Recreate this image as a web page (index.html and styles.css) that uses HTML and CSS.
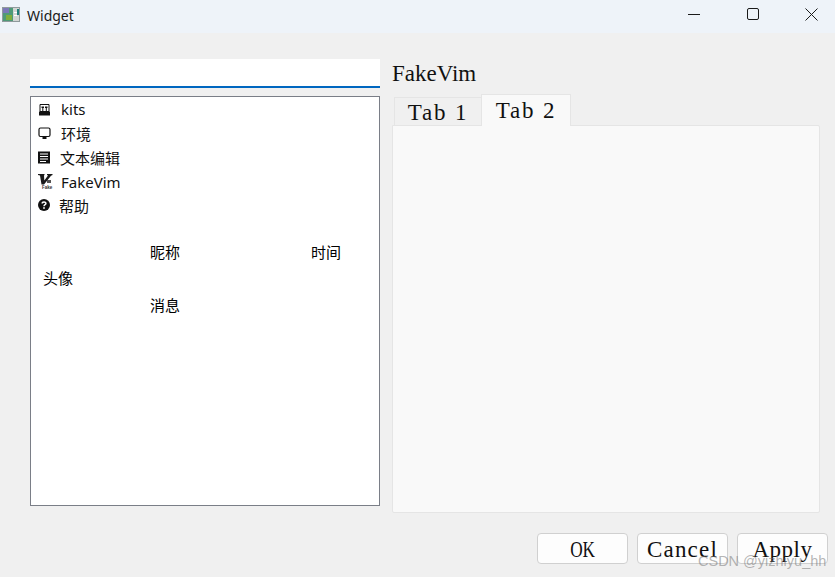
FILE: index.html
```html
<!DOCTYPE html>
<html lang="zh">
<head>
<meta charset="utf-8">
<title>Widget</title>
<link rel="stylesheet" href="styles.css">
</head>
<body>
<div class="window">
  <header class="titlebar">
    <svg class="app-icon" width="18" height="18" viewBox="0 0 18 18">
      <rect x="0" y="1" width="18" height="15" fill="#8f9a9c"/>
      <rect x="1" y="2" width="10" height="13" fill="#4f9a78"/>
      <rect x="1" y="2" width="6" height="5" fill="#7a78b8"/>
      <rect x="4" y="9" width="6" height="5" fill="#7fae3c"/>
      <rect x="11" y="2" width="6" height="13" fill="#d3d6d4"/>
      <rect x="15" y="3" width="2" height="6" fill="#1f7f7a"/>
      <rect x="12" y="6" width="3" height="1" fill="#fff"/>
      <rect x="12" y="9" width="3" height="1" fill="#fff"/>
    </svg>
    <span class="title">Widget</span>
    <div class="controls">
      <svg class="ctl ctl-min" width="12" height="12" viewBox="0 0 12 12"><path d="M0 6.500H12" stroke="#1a1a1a" fill="none"/></svg>
      <svg class="ctl ctl-max" width="12" height="12" viewBox="0 0 12 12"><rect x="0.500" y="0.500" width="11" height="11" rx="1.500" stroke="#1a1a1a" fill="none"/></svg>
      <svg class="ctl ctl-close" width="13" height="13" viewBox="0 0 13 13"><path d="M0.500 0.500L12.500 12.500M12.500 0.500L0.500 12.500" stroke="#1a1a1a" fill="none"/></svg>
    </div>
  </header>

  <main class="content">
    <div class="top">
      <section class="left">
        <div class="search"></div>
        <div class="listbox">
          <ul class="items">
            <li class="item">
              <svg class="ico ico-kits" width="13" height="13" viewBox="0 0 13 13"><path d="M2 1.500h9v7H2z" fill="none" stroke="#111"/><path d="M3.500 3.500h2.500v1.500H5.300V8h-1V5h-.8zM7 3.500h2.500v1.500H8.800V8h-1V5H7z" fill="#111"/><path d="M1 8.500h11v4H1z" fill="#111"/></svg>
              <span>kits</span>
            </li>
            <li class="item">
              <svg class="ico ico-env" width="13" height="13" viewBox="0 0 13 13"><rect x="1" y="1" width="11" height="8.500" rx="1.500" fill="none" stroke="#111" stroke-width="1.200"/><path d="M4.500 10h4v2h-4z" fill="#111"/></svg>
              <span>环境</span>
            </li>
            <li class="item">
              <svg class="ico ico-text" width="12" height="13" viewBox="0 0 12 13"><rect x="0" y="0.500" width="12" height="12" fill="#111"/><path d="M2 3h8M2 5.500h8M2 8h8M2 10.500h6" stroke="#fff" stroke-width="1"/></svg>
              <span>文本编辑</span>
            </li>
            <li class="item item-vim">
              <svg class="ico ico-vim" width="15" height="16" viewBox="0 0 15 16"><path d="M0 1h6.500v1L6 2.500 6.300 7.500 10 2.500 9 2V1h5.500v1L13 2.800 6 11.500H3.500L2 2.500 0 2z" fill="#1a1a1a"/><path d="M9 7h4v3H9z" fill="#555"/><text class="vim-tag" x="4" y="15.500">Fake</text></svg>
              <span>FakeVim</span>
            </li>
            <li class="item">
              <svg class="ico ico-help" width="12" height="12" viewBox="0 0 12 12"><circle cx="6" cy="6" r="6" fill="#111"/><path d="M4.200 4.600C4.200 2.400 7.900 2.400 7.900 4.500C7.900 5.800 6 5.700 6 7.200" fill="none" stroke="#fff" stroke-width="1.500"/><rect x="5.200" y="8.200" width="1.600" height="1.600" fill="#fff"/></svg>
              <span>帮助</span>
            </li>
          </ul>
          <div class="chat">
            <span class="nick">昵称</span>
            <span class="time">时间</span>
            <span class="avatar">头像</span>
            <span class="msg">消息</span>
          </div>
        </div>
      </section>

      <section class="right">
        <div class="heading">FakeVim</div>
        <div class="tabs">
          <div class="tab tab-off">Tab 1</div>
          <div class="tab tab-on">Tab 2</div>
        </div>
        <div class="panel"></div>
      </section>
    </div>

    <footer class="buttons">
      <button class="btn btn-ok"><span>OK</span></button>
      <button class="btn btn-cancel">Cancel</button>
      <button class="btn btn-apply">Apply</button>
    </footer>
  </main>
  <div class="watermark">CSDN @yizhiyu_hh</div>
</div>
</body>
</html>
```
FILE: styles.css
```css
* { box-sizing: border-box; }
html, body { margin: 0; padding: 0; }
body {
  width: 835px;
  height: 577px;
  overflow: hidden;
  background: #f0f0f0;
  font-family: "Noto Sans", "Noto Sans CJK SC", sans-serif;
  color: #000;
}
.window { position: relative; width: 835px; height: 577px; }

.titlebar {
  height: 33px;
  background: #eef3f9;
  display: flex;
  align-items: center;
  padding-left: 2px;
}
.app-icon { margin-top: -4px; }
.title { font-size: 14px; margin-left: 7px; color: #1a1a1a; margin-top: -3px; }
.controls { margin-left: auto; display: flex; align-items: center; margin-top: -5px; padding-right: 17px; }
.ctl-min { margin-right: 47px; }
.ctl-max { margin-right: 46px; }

.content { padding: 26px 7px 0 30px; }
.top { display: flex; }
.left { width: 350px; }
.search {
  height: 29px;
  background: #fff;
  border-bottom: 2px solid #0067c0;
}
.listbox {
  margin-top: 8px;
  height: 410px;
  background: #fff;
  border: 1px solid #7a7e87;
}
.items { list-style: none; margin: 0; padding: 0; }
.item {
  height: 24px;
  display: flex;
  align-items: center;
  font-size: 15px;
  padding-left: 7px;
  color: #111;
}
.item-vim span { padding-top: 1px; }
.ico { flex: none; }
.ico-kits { margin-right: 10px; }
.ico-env { margin-right: 10px; }
.ico-text { margin-right: 10px; }
.ico-vim { margin-right: 8px; }
.ico-help { margin-right: 9px; }
.vim-tag { font-family: "Liberation Sans", sans-serif; font-size: 4.500px; font-weight: 700; fill: #333; }

.chat {
  margin-top: 21px;
  display: grid;
  grid-template-columns: 107px 161px auto;
  grid-template-rows: repeat(3, 26.500px);
  padding-left: 12px;
  font-size: 15px;
  align-items: center;
}
.nick { grid-column: 2; grid-row: 1; }
.time { grid-column: 3; grid-row: 1; }
.avatar { grid-column: 1; grid-row: 2; }
.msg { grid-column: 2; grid-row: 3; }

.right { width: 428px; margin-left: 12px; }
.heading {
  height: 35px;
  font-family: "Liberation Serif", serif;
  font-size: 23px;
  line-height: 29px;
  color: #111;
}
.tabs { display: flex; align-items: flex-end; padding-left: 2px; height: 32px; position: relative; z-index: 1; margin-bottom: -1px; }
.tab {
  font-family: "Liberation Serif", serif;
  font-size: 23px;
  letter-spacing: 1.800px;
  color: #111;
  text-align: center;
  border: 1px solid #e5e5e5;
}
.tab-off { width: 87px; height: 29px; line-height: 30px; background: #f0f0f0; border-right: 0; }
.tab-on { width: 90px; height: 32px; line-height: 32px; background: #f9f9f9; border-bottom: 0; }
.panel {
  height: 388px;
  background: #f9f9f9;
  border: 1px solid #e5e5e5;
  border-radius: 0 2px 2px 2px;
}

.buttons { display: flex; justify-content: flex-end; gap: 9px; margin-top: 20px; }
.btn {
  width: 91px;
  height: 31px;
  padding: 1px 0 0;
  background: #fdfdfd;
  border: 1px solid #d0d0d0;
  border-radius: 4px;
  font-family: "Liberation Serif", serif;
  font-size: 23px;
  line-height: 29px;
  color: #111;
}
.btn-ok span { display: inline-block; transform: scaleX(0.750); }
.btn-cancel { letter-spacing: 1.200px; }
.btn-apply { letter-spacing: 0.500px; }
.watermark {
  position: absolute;
  left: 698px;
  top: 553px;
  font-family: "Liberation Sans", sans-serif;
  font-size: 14.500px;
  color: rgba(120, 120, 120, 0.55);
  white-space: nowrap;
}
```
